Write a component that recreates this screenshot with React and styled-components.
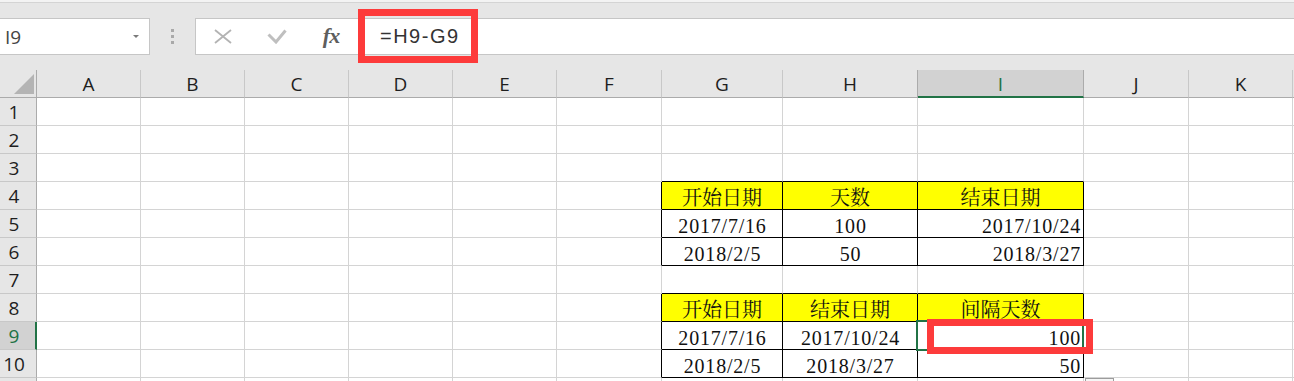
import React from 'react';
import styled, { createGlobalStyle } from 'styled-components';

const GlobalStyle = createGlobalStyle`
  html, body {
    margin: 0;
    padding: 0;
    background: #ffffff;
  }
  body {
    font-family: "Open Sans", "Noto Sans", "Liberation Sans", sans-serif;
  }
`;

const GREEN = '#217346';
const GRID = '#d4d4d4';
const HEAD_LINE = '#ababab';

const columns = [
  { key: 'A', w: 104 },
  { key: 'B', w: 104 },
  { key: 'C', w: 104 },
  { key: 'D', w: 104 },
  { key: 'E', w: 104 },
  { key: 'F', w: 105 },
  { key: 'G', w: 121 },
  { key: 'H', w: 135 },
  { key: 'I', w: 166 },
  { key: 'J', w: 105 },
  { key: 'K', w: 104 },
];

const cells = {
  G4: { text: '开始日期', align: 'center' },
  H4: { text: '天数', align: 'center' },
  I4: { text: '结束日期', align: 'center' },
  G5: { text: '2017/7/16', align: 'center', num: true },
  H5: { text: '100', align: 'center', num: true },
  I5: { text: '2017/10/24', align: 'right', num: true },
  G6: { text: '2018/2/5', align: 'center', num: true },
  H6: { text: '50', align: 'center', num: true },
  I6: { text: '2018/3/27', align: 'right', num: true },
  G8: { text: '开始日期', align: 'center' },
  H8: { text: '结束日期', align: 'center' },
  I8: { text: '间隔天数', align: 'center' },
  G9: { text: '2017/7/16', align: 'center', num: true },
  H9: { text: '2017/10/24', align: 'center', num: true },
  I9: { text: '100', align: 'right', num: true },
  G10: { text: '2018/2/5', align: 'center', num: true },
  H10: { text: '2018/3/27', align: 'center', num: true },
  I10: { text: '50', align: 'right', num: true },
};

// the two bordered tables sit in G:I, rows 4-6 and 8-10
const inTable = (r, c) => c >= 6 && c <= 8 && ((r >= 4 && r <= 6) || (r >= 8 && r <= 10));
const isHeaderRow = (r, c) => c >= 6 && c <= 8 && (r === 4 || r === 8);

const Page = styled.div`
  width: 1294px;
  height: 381px;
  overflow: hidden;
  background: #e6e6e6;
  display: flex;
  flex-direction: column;
`;

const TopStrip = styled.div`
  height: 18px;
  flex: none;
  background: linear-gradient(#f3f3f3 0 2px, #d4d4d4 2px 3px, #e6e6e6 3px);
`;

const FormulaBar = styled.div`
  height: 37px;
  flex: none;
  display: flex;
`;

const NameBox = styled.div`
  width: 150px;
  box-sizing: border-box;
  background: #fff;
  border: 1px solid #c6c6c6;
  border-left: none;
  display: flex;
  align-items: center;
  justify-content: space-between;
  padding: 0 10px 0 5px;
  font-size: 19px;
  color: #444;
`;

const DropArrow = styled.span`
  width: 0;
  height: 0;
  border-left: 3px solid transparent;
  border-right: 3px solid transparent;
  border-top: 3px solid #7a7a7a;
`;

const Splitter = styled.div`
  width: 45px;
  display: flex;
  flex-direction: column;
  align-items: center;
  justify-content: center;
  gap: 3px;
`;

const Dot = styled.span`
  width: 3px;
  height: 3px;
  background: #a9a9a9;
`;

const FormulaBox = styled.div`
  flex: 1;
  position: relative;
  background: #fff;
  border: 1px solid #c6c6c6;
  border-right: none;
  display: flex;
  align-items: center;
`;

const IconSlot = styled.div`
  width: 54px;
  height: 100%;
  display: flex;
  align-items: center;
  justify-content: center;
`;

const Fx = styled.span`
  font-family: "Liberation Serif", serif;
  font-style: italic;
  font-weight: bold;
  font-size: 22px;
  color: #5e5e5e;
  letter-spacing: -1px;
  margin-top: -2px;
`;

const FormulaText = styled.span`
  padding-left: 22px;
  font-family: "Liberation Sans", sans-serif;
  font-size: 20px;
  letter-spacing: 1.5px;
  color: #333;
`;

const Mark = styled.div`
  position: absolute;
  z-index: 3;
  box-sizing: border-box;
  border: 7px solid #fd3b3b;
  pointer-events: none;
`;

const FormulaMark = styled(Mark)`
  left: 162px;
  top: -10px;
  width: 120px;
  height: 54px;
`;

const CellMark = styled(Mark)`
  left: 9px;
  top: -3px;
  width: 166px;
  height: 35px;
`;

const Selection = styled.div`
  position: absolute;
  z-index: 2;
  left: -2px;
  top: -2px;
  right: -1px;
  bottom: -2px;
  border: 2px solid ${GREEN};
  pointer-events: none;
`;

const PasteButton = styled.div`
  position: absolute;
  z-index: 2;
  left: 167px;
  top: 28px;
  width: 29px;
  height: 18px;
  box-sizing: border-box;
  border: 1px solid #9c9c9c;
  background: #f6f6f6;
`;

const Gap = styled.div`
  height: 15px;
  flex: none;
`;

const Grid = styled.div`
  display: grid;
  grid-template-columns: 37px ${columns.map((c) => `${c.w}px`).join(' ')} 1fr;
  grid-auto-rows: 28px;
`;

const Corner = styled.div`
  box-sizing: border-box;
  background: #e6e6e6;
  border-right: 1px solid ${HEAD_LINE};
  border-bottom: 1px solid ${HEAD_LINE};
  display: flex;
  align-items: flex-end;
  justify-content: flex-end;
  padding: 0 2px 3px 0;
`;

const CornerTriangle = styled.span`
  width: 0;
  height: 0;
  border-left: 20px solid transparent;
  border-bottom: 20px solid #b4b4b4;
`;

const ColHead = styled.div`
  box-sizing: border-box;
  background: ${(p) => (p.$active ? '#d2d2d2' : '#e6e6e6')};
  border-right: 1px solid ${(p) => (p.$active || p.$beforeActive ? HEAD_LINE : '#c8c8c8')};
  border-bottom: ${(p) => (p.$active ? `2px solid ${GREEN}` : `1px solid ${HEAD_LINE}`)};
  display: flex;
  align-items: center;
  justify-content: center;
  font-size: 19px;
  color: ${(p) => (p.$active ? GREEN : '#1e1e1e')};
  padding-top: 1px;
`;

const RowHead = styled.div`
  box-sizing: border-box;
  background: ${(p) => (p.$active ? '#d2d2d2' : '#e6e6e6')};
  border-right: ${(p) => (p.$active ? `2px solid ${GREEN}` : `1px solid ${HEAD_LINE}`)};
  border-bottom: 1px solid #c8c8c8;
  display: flex;
  align-items: center;
  justify-content: center;
  padding-right: ${(p) => (p.$active ? 7 : 8)}px;
  font-size: 19px;
  color: ${(p) => (p.$active ? GREEN : '#1e1e1e')};
`;

const Cell = styled.div`
  position: relative;
  box-sizing: border-box;
  background: ${(p) => (p.$yellow ? '#ffff00' : '#ffffff')};
  border-right: 1px solid ${(p) => (p.$blackRight ? '#000' : GRID)};
  border-bottom: 1px solid ${(p) => (p.$blackBottom ? '#000' : GRID)};
  display: flex;
  align-items: flex-end;
  justify-content: ${(p) =>
    p.$align === 'right' ? 'flex-end' : p.$align === 'center' ? 'center' : 'flex-start'};
  padding: 0 ${(p) => (p.$num ? 2 : 3)}px 1px 3px;
  font-family: "Liberation Serif", "Noto Serif CJK SC", "Noto Sans CJK SC", serif;
  font-size: 20px;
  line-height: 20px;
  letter-spacing: ${(p) => (p.$num ? '0.8px' : '0')};
  color: #111;
  white-space: nowrap;
`;

const Filler = styled.div`
  background: ${(p) => (p.$head ? '#e6e6e6' : '#fff')};
  border-bottom: 1px solid ${(p) => (p.$head ? HEAD_LINE : GRID)};
`;

function CloseIcon() {
  return (
    <svg width="18" height="15" viewBox="0 0 18 15">
      <path d="M1 1 L17 14 M17 1 L1 14" stroke="#b3b3b3" strokeWidth="1.8" fill="none" />
    </svg>
  );
}

function CheckIcon() {
  return (
    <svg width="20" height="15" viewBox="0 0 20 15">
      <polyline points="1.5,5.5 9,13 18.5,1.5" stroke="#bfbfbf" strokeWidth="3" fill="none" />
    </svg>
  );
}

function SheetRow({ r, label }) {
  const active = r === 9;
  return (
    <>
      <RowHead $active={active}>{label ? r : null}</RowHead>
      {columns.map((col, c) => {
        const id = `${col.key}${r}`;
        const data = cells[id];
        return (
          <Cell
            key={id}
            $yellow={isHeaderRow(r, c)}
            $blackRight={inTable(r, c) || inTable(r, c + 1)}
            $blackBottom={inTable(r, c) || inTable(r + 1, c)}
            $align={data ? data.align : 'left'}
            $num={data && data.num}
          >
            {data ? data.text : null}
            {id === 'I9' && (
              <>
                <Selection />
                <CellMark />
              </>
            )}
            {id === 'I10' && <PasteButton />}
          </Cell>
        );
      })}
      <Filler />
    </>
  );
}

export default function App() {
  const rows = [1, 2, 3, 4, 5, 6, 7, 8, 9, 10, 11];
  return (
    <>
      <GlobalStyle />
      <Page>
        <TopStrip />
        <FormulaBar>
          <NameBox>
            <span>I9</span>
            <DropArrow />
          </NameBox>
          <Splitter>
            <Dot />
            <Dot />
            <Dot />
          </Splitter>
          <FormulaBox>
            <IconSlot>
              <CloseIcon />
            </IconSlot>
            <IconSlot>
              <CheckIcon />
            </IconSlot>
            <IconSlot>
              <Fx>fx</Fx>
            </IconSlot>
            <FormulaText>=H9-G9</FormulaText>
            <FormulaMark />
          </FormulaBox>
        </FormulaBar>
        <Gap />
        <Grid>
          <Corner>
            <CornerTriangle />
          </Corner>
          {columns.map((col) => (
            <ColHead key={col.key} $active={col.key === 'I'} $beforeActive={col.key === 'H'}>
              {col.key}
            </ColHead>
          ))}
          <Filler $head />
          {/* row 11 only peeks in under the bottom edge, so it has no label */}
          {rows.map((r) => (
            <SheetRow key={r} r={r} label={r <= 10} />
          ))}
        </Grid>
      </Page>
    </>
  );
}
